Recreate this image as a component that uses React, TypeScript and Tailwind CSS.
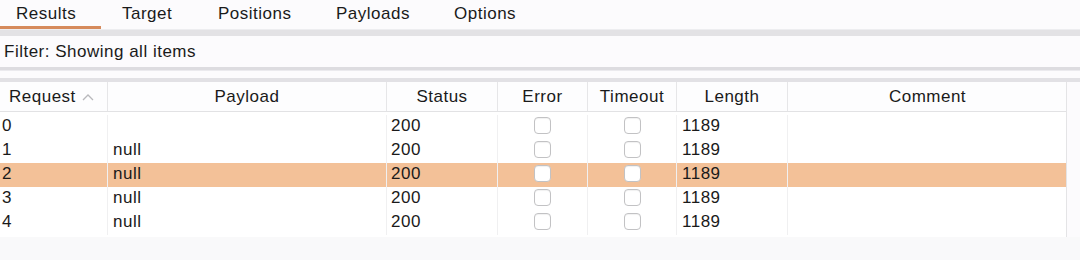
import React from "react";

const cols = [
  { name: "Request", w: "w-[108px]", align: "left" },
  { name: "Payload", w: "w-[279px]", align: "center" },
  { name: "Status", w: "w-[111px]", align: "center" },
  { name: "Error", w: "w-[90px]", align: "center" },
  { name: "Timeout", w: "w-[89px]", align: "center" },
  { name: "Length", w: "w-[111px]", align: "center" },
  { name: "Comment", w: "w-[279px]", align: "center" },
];

const rows = [
  { req: "0", payload: "" },
  { req: "1", payload: "null" },
  { req: "2", payload: "null", sel: true },
  { req: "3", payload: "null" },
  { req: "4", payload: "null" },
];

function Check() {
  return (
    <div className="w-[17px] h-[17px] rounded-[4px] border border-[#c2c2c4] bg-white shadow-[inset_0_1px_1px_rgba(0,0,0,0.06)]" />
  );
}

const cell = "h-full flex items-center shrink-0 pb-[3px] border-r border-[#f0f0f1]";

export default function App() {
  return (
    <div
      className="w-[1080px] h-[260px] overflow-hidden bg-[#fcfbfd] text-[#1a1a1a] text-[17px] tracking-[0.5px] leading-none"
      style={{ fontFamily: '"Liberation Sans", Arial, sans-serif' }}
    >
      {/* Tabs */}
      <div className="h-[29px] flex items-stretch">
        <div className="w-[101px] pl-[16px] pt-[5px] border-b-[3px] border-[#d68a5c]">Results</div>
        <div className="w-[96px] ml-[21px] pt-[5px]">Target</div>
        <div className="w-[118px] pt-[5px]">Positions</div>
        <div className="w-[118px] pt-[5px]">Payloads</div>
        <div className="w-[118px] pt-[5px]">Options</div>
      </div>
      <div className="h-[7px] bg-[#e3e2e5] border-t border-[#ededf0]" />
      {/* Filter */}
      <div className="h-[31px] flex items-center pl-[4px] bg-[#fcfbfd]">Filter: Showing all items</div>
      <div className="h-[4px] bg-[#dddce0] border-b border-[#ebeaee]" />
      <div className="h-[7px]" />
      <div className="h-[4px] bg-[#e2e1e5]" />
      {/* Table */}
      <div className="grid grid-cols-[1067px_13px]">
        <div className="border-r border-[#e4e4e6] overflow-hidden">
          <div className="flex h-[30px] bg-[#fdfdfe] border-b border-[#e2e2e4]">
            {cols.map((c, i) => (
              <div
                key={c.name}
                className={
                  c.w +
                  " shrink-0 flex items-center h-full border-[#e6e6e8] " +
                  (i < cols.length - 1 ? "border-r " : "") +
                  (c.align === "left" ? "pl-[9px] justify-start" : "justify-center")
                }
              >
                {c.name}
                {c.name === "Request" && (
                  <svg width="12" height="8" viewBox="0 0 12 8" className="ml-[6px]">
                    <path d="M1 7 L6 2 L11 7" fill="none" stroke="#b8b8bc" strokeWidth="1.3" />
                  </svg>
                )}
              </div>
            ))}
          </div>
          <div className="pt-[3px] pb-[2px] bg-white">
            {rows.map((r) => (
              <div
                key={r.req}
                className={"flex h-[24px] " + (r.sel ? "bg-[#f3c198]" : "bg-white")}
              >
                <div className={"w-[108px] pl-[2px] " + cell}>{r.req}</div>
                <div className={"w-[279px] pl-[5px] " + cell}>{r.payload}</div>
                <div className={"w-[111px] pl-[4px] " + cell}>200</div>
                <div className={"w-[90px] justify-center " + cell}><Check /></div>
                <div className={"w-[89px] justify-center " + cell}><Check /></div>
                <div className={"w-[111px] pl-[5px] " + cell}>1189</div>
                <div className="w-[270px] shrink-0 h-full" />
              </div>
            ))}
          </div>
        </div>
        <div className="bg-[#fcfbfd]" />
      </div>
      <div className="h-[30px] bg-[#f9f9fa]" />
    </div>
  );
}
